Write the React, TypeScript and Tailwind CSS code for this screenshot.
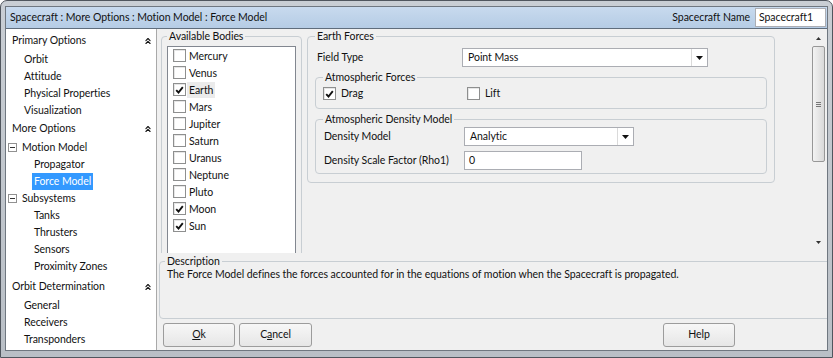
import { ChevronsUp } from "lucide-react";
import type { ReactNode } from "react";

function Check({ checked }: { checked?: boolean }) {
  return (
    <span className="flex h-[13px] w-[13px] shrink-0 items-center justify-center border border-[#8e8f8f] bg-white shadow-[inset_1px_1px_0_#e6e6e6]">
      {checked && (
        <svg width="9" height="8" viewBox="0 0 9 8">
          <path d="M1.2 4.2 L3.5 6.5 L7.8 1.2" fill="none" stroke="#111" strokeWidth="1.9" />
        </svg>
      )}
    </span>
  );
}

function Arrow() {
  return (
    <svg width="7" height="4" viewBox="0 0 7 4">
      <path d="M0 0h7L3.5 4z" fill="#111" />
    </svg>
  );
}

function Combo({ value, className }: { value: string; className: string }) {
  return (
    <div className={`flex h-[19px] border border-[#abadb3] bg-white ${className}`}>
      <span className="flex-1 pl-[5px] leading-[17px]">{value}</span>
      <span className="flex w-[16px] items-center justify-center border-l border-[#dadada]">
        <Arrow />
      </span>
    </div>
  );
}

// group box: title sits on the top border line
function Group({ title, className, children }: { title: string; className: string; children: ReactNode }) {
  return (
    <div className={`rounded-[4px] border border-[#c8ced3] ${className}`}>
      <div className="-mt-[8px] flex">
        <span className="bg-[#f0f0f0] px-[2px] leading-[14px]">{title}</span>
      </div>
      {children}
    </div>
  );
}

function NavHeader({ label, className = "" }: { label: string; className?: string }) {
  return (
    <div className={`flex h-[20px] items-center justify-between pl-[6px] pr-[3px] ${className}`}>
      <span>{label}</span>
      <ChevronsUp size={10} strokeWidth={2.6} color="#111" />
    </div>
  );
}

function NavItem({ label, level, tree, selected }: { label: string; level: 1 | 2; tree?: boolean; selected?: boolean }) {
  if (tree) {
    return (
      <div className="flex h-[17px] items-center pl-[2px]">
        <span className="flex h-[9px] w-[9px] items-center justify-center border border-[#919191] bg-white">
          <span className="h-[1px] w-[5px] bg-[#333]" />
        </span>
        <span className="ml-[5px]">{label}</span>
      </div>
    );
  }
  return (
    <div className={`flex h-[17px] items-center ${level === 1 ? "pl-[16px]" : "pl-[26px]"}`}>
      <span className={`px-[2px] leading-[17px] ${selected ? "bg-[#3399ff] text-white" : ""}`}>{label}</span>
    </div>
  );
}

const bodies = [
  { name: "Mercury" },
  { name: "Venus" },
  { name: "Earth", checked: true, focus: true },
  { name: "Mars" },
  { name: "Jupiter" },
  { name: "Saturn" },
  { name: "Uranus" },
  { name: "Neptune" },
  { name: "Pluto" },
  { name: "Moon", checked: true },
  { name: "Sun", checked: true },
];

function Button({ children, className = "" }: { children: ReactNode; className?: string }) {
  return (
    <button className={`h-[24px] rounded-[3px] border border-[#9c9c9c] bg-gradient-to-b from-[#f7f7f7] to-[#e6e6e6] text-[#111] ${className}`}>
      {children}
    </button>
  );
}

export default function App() {
  return (
    <div className="h-[358px] w-[833px] overflow-hidden bg-white font-['Lato','Open_Sans',sans-serif] text-[10.5px] tracking-[-0.05px] text-[#111]">
      <div className="flex h-full flex-col rounded-t-[7px] border border-[#50565e] bg-gradient-to-b from-[#c9ced4] to-[#b9bfc6] px-[4px] pb-[6px] pt-[5px]">
        <div className="flex flex-1 flex-col overflow-hidden border border-[#6f7780] bg-white">
          {/* title row */}
          <div className="flex h-[22px] items-center justify-between border-b border-[#5f6d7c] bg-gradient-to-b from-[#c8daee] to-[#b5cce5] pl-[4px] pr-[1px]">
            <span>Spacecraft : More Options : Motion Model : Force Model</span>
            <div className="flex items-center">
              <span>Spacecraft Name</span>
              <div className="ml-[5px] h-[19px] w-[71px] border border-[#abadb3] bg-white pl-[3px] leading-[17px]">Spacecraft1</div>
            </div>
          </div>

          <div className="flex flex-1">
            {/* left nav */}
            <div className="w-[151px] border-r border-[#a9a9a9] bg-white pt-[2px]">
              <NavHeader label="Primary Options" />
              <NavItem label="Orbit" level={1} />
              <NavItem label="Attitude" level={1} />
              <NavItem label="Physical Properties" level={1} />
              <NavItem label="Visualization" level={1} />
              <NavHeader label="More Options" />
              <NavItem label="Motion Model" level={1} tree />
              <NavItem label="Propagator" level={2} />
              <NavItem label="Force Model" level={2} selected />
              <NavItem label="Subsystems" level={1} tree />
              <NavItem label="Tanks" level={2} />
              <NavItem label="Thrusters" level={2} />
              <NavItem label="Sensors" level={2} />
              <NavItem label="Proximity Zones" level={2} />
              <NavHeader label="Orbit Determination" className="mt-[2px]" />
              <NavItem label="General" level={1} />
              <NavItem label="Receivers" level={1} />
              <NavItem label="Transponders" level={1} />
            </div>

            {/* content */}
            <div className="flex flex-1 flex-col overflow-hidden bg-[#f0f0f0]">
              <div className="flex h-[224px]">
                <div className="flex flex-1 items-start gap-[5px] overflow-hidden pl-[4px] pt-[7px]">
                  <Group title="Available Bodies" className="w-[141px] shrink-0 px-[5px]">
                    <div className="mt-[3px] h-[215px] border border-[#828790] bg-white">
                      {bodies.map((b) => (
                        <div key={b.name} className="flex h-[17px] items-center pl-[5px]">
                          <Check checked={b.checked} />
                          <span className={`ml-[1px] px-[2px] leading-[16px] ${b.focus ? "bg-[#ebebeb]" : ""}`}>{b.name}</span>
                        </div>
                      ))}
                    </div>
                  </Group>

                  <Group title="Earth Forces" className="w-[468px] shrink-0 px-[7px] pb-[8px]">
                    <div className="mt-[5px] flex h-[19px] items-center">
                      <span className="w-[147px] pl-[2px]">Field Type</span>
                      <Combo value="Point Mass" className="w-[246px]" />
                    </div>

                    <Group title="Atmospheric Forces" className="mt-[10px] px-[7px] pb-[6px]">
                      <div className="mt-[1px] flex h-[17px] items-center">
                        <div className="flex w-[144px] items-center">
                          <Check checked />
                          <span className="ml-[5px]">Drag</span>
                        </div>
                        <div className="flex items-center">
                          <Check />
                          <span className="ml-[5px]">Lift</span>
                        </div>
                      </div>
                    </Group>

                    <Group title="Atmospheric Density Model" className="mt-[10px] px-[7px] pb-[3px]">
                      <div className="mt-[1px] flex h-[19px] items-center">
                        <span className="w-[141px] pl-[1px]">Density Model</span>
                        <Combo value="Analytic" className="w-[170px]" />
                      </div>
                      <div className="mt-[5px] flex h-[19px] items-center">
                        <span className="w-[141px] pl-[1px]">Density Scale Factor (Rho1)</span>
                        <div className="h-[19px] w-[118px] border border-[#abadb3] bg-white pl-[4px] leading-[17px]">0</div>
                      </div>
                    </Group>
                  </Group>
                </div>

                {/* scrollbar */}
                <div className="flex w-[17px] flex-col items-center bg-[#f0f0f0]">
                  <div className="flex h-[17px] items-center justify-center pt-[2px]">
                    <svg width="5" height="3" viewBox="0 0 5 3">
                      <path d="M0 3h5L2.5 0z" fill="#333" />
                    </svg>
                  </div>
                  <div className="flex h-[116px] w-[13px] items-center justify-center rounded-[2px] border border-[#979797] bg-gradient-to-r from-[#f3f3f3] to-[#d9d9d9]">
                    <div className="flex flex-col gap-[1px]">
                      <span className="h-[1px] w-[5px] bg-[#777]" />
                      <span className="h-[1px] w-[5px] bg-[#777]" />
                      <span className="h-[1px] w-[5px] bg-[#777]" />
                    </div>
                  </div>
                  <div className="flex-1" />
                  <div className="flex h-[17px] items-center justify-center pb-[4px]">
                    <svg width="5" height="3" viewBox="0 0 5 3">
                      <path d="M0 0h5L2.5 3z" fill="#333" />
                    </svg>
                  </div>
                </div>
              </div>

              <Group title="Description" className="-mr-[4px] ml-[2px] mt-[8px] h-[58px] px-[5px]">
                <p className="-mt-[1px] pl-[2px] leading-[14px]">
                  The Force Model defines the forces accounted for in the equations of motion when the Spacecraft is propagated.
                </p>
              </Group>

              <div className="mt-[4px] flex pl-[6px] pr-[92px]">
                <Button className="w-[72px]">
                  <span className="underline">O</span>k
                </Button>
                <Button className="ml-[4px] w-[73px]">
                  C<span className="underline">a</span>ncel
                </Button>
                <Button className="ml-auto w-[72px]">Help</Button>
              </div>
            </div>
          </div>
        </div>
      </div>
    </div>
  );
}
